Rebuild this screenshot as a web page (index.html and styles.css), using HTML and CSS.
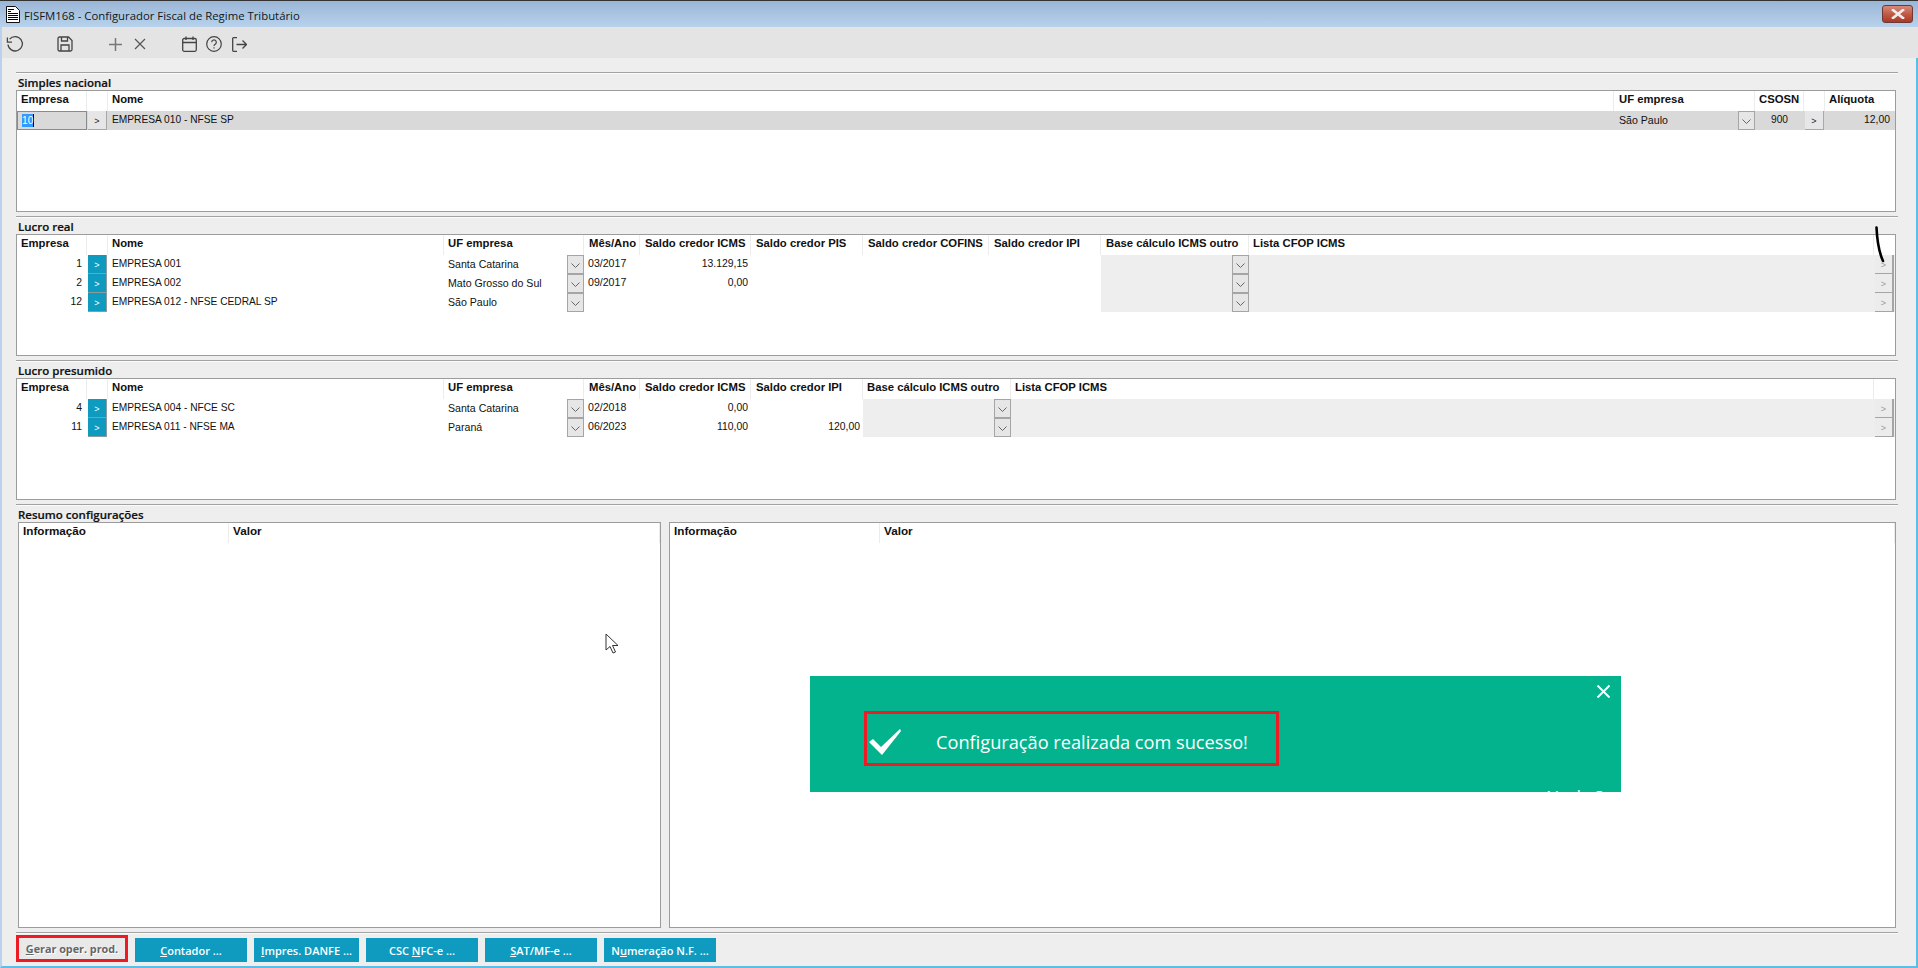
FILE: index.html
```html
<!DOCTYPE html>
<html lang="pt-BR">
<head>
<meta charset="utf-8">
<title>FISFM168 - Configurador Fiscal de Regime Tributário</title>
<link rel="stylesheet" href="styles.css">
</head>
<body>
<div class="window">
  <header class="titlebar">
    <svg class="doc-icon" width="14" height="17" viewBox="0 0 14 17"><path d="M.5.5h9l4 4v12H.5z" fill="#fff" stroke="#111"/><path d="M2 3.500h6M2 5.500h3M2 7.500h10M2 9.500h10M2 11.500h10M2 13.500h10" stroke="#000" stroke-width="1.200"/></svg>
    <span class="title-text">FISFM168 - Configurador Fiscal de Regime Tributário</span>
    <button class="win-close"><svg width="14" height="10" viewBox="0 0 14 10"><path d="M2 1l10 8M12 1L2 9" stroke="#eee" stroke-width="2.600" stroke-linecap="square"/></svg></button>
  </header>
  <nav class="toolbar">
    <svg class="tool t-undo" width="18" height="18" viewBox="0 0 18 18" fill="none" stroke="#444" stroke-width="1.3"><path d="M3.600 4.200A7.200 7.200 0 1 1 2 9.500"/><path d="M1.400 2.600v4.600h4.600"/></svg>
    <svg class="tool t-save" width="16" height="16" viewBox="0 0 16 16" fill="none" stroke="#444" stroke-width="1.3"><path d="M1 2.500A1.500 1.500 0 0 1 2.500 1h9L15 4.500v9a1.500 1.500 0 0 1-1.500 1.500h-11A1.500 1.500 0 0 1 1 13.500z"/><path d="M4.500 1v4h6V1M4 15V9h8v6"/></svg>
    <svg class="tool t-plus" width="13" height="13" viewBox="0 0 13 13" fill="none" stroke="#777" stroke-width="1.500"><path d="M6.500 0v13M0 6.500h13"/></svg>
    <svg class="tool t-x" width="12" height="12" viewBox="0 0 12 12" fill="none" stroke="#555" stroke-width="1.200"><path d="M1 1l10 10M11 1L1 11"/></svg>
    <svg class="tool t-cal" width="15" height="16" viewBox="0 0 15 16" fill="none" stroke="#444" stroke-width="1.300"><rect x=".7" y="2.500" width="13.600" height="12.800" rx="1.500"/><path d="M.7 6.500h13.600M4 .5v3.500M11 .5v3.500"/></svg>
    <svg class="tool t-help" width="16" height="16" viewBox="0 0 16 16" fill="none" stroke="#444" stroke-width="1.200"><circle cx="8" cy="8" r="7.300"/><path d="M5.700 6.200a2.300 2.300 0 1 1 3.500 2c-.8.500-1.200.9-1.200 1.800"/><path d="M8 11.300v1.200"/></svg>
    <svg class="tool t-exit" width="15" height="15" viewBox="0 0 15 15" fill="none" stroke="#444" stroke-width="1.300"><path d="M5 .7H1.500a.8.800 0 0 0-.8.800v12a.8.800 0 0 0 .8.800H5"/><path d="M4.500 7.500h10M10.500 3.500l4 4-4 4"/></svg>
  </nav>

  <main class="content">
    <section class="group">
      <h2 class="group-label">Simples nacional</h2>
      <div class="box">
        <div class="grid cols-simples head">
          <div class="th">Empresa</div><div class="th"></div><div class="th">Nome</div><div class="th span2 inset">UF empresa</div><div class="th">CSOSN</div><div class="th"></div><div class="th last">Alíquota</div>
        </div>
        <div class="grid cols-simples row current">
          <div class="td input"><span class="sel">10</span></div>
          <div class="td"><button class="go plain">&gt;</button></div>
          <div class="td">EMPRESA 010 - NFSE SP</div>
          <div class="td uf inset">São Paulo</div>
          <div class="td"><button class="combo"><svg class="chev" width="9" height="5" viewBox="0 0 9 5"><path d="M.5.500l4 4 4-4" fill="none" stroke="#666"/></svg></button></div>
          <div class="td center">900</div>
          <div class="td"><button class="go plain">&gt;</button></div>
          <div class="td num wide">12,00</div>
        </div>
      </div>
    </section>

    <section class="group">
      <h2 class="group-label">Lucro real</h2>
      <div class="box">
        <div class="grid cols-real head">
          <div class="th">Empresa</div><div class="th"></div><div class="th">Nome</div><div class="th span2">UF empresa</div><div class="th inset">Mês/Ano</div><div class="th inset">Saldo credor ICMS</div><div class="th inset">Saldo credor PIS</div><div class="th inset">Saldo credor COFINS</div><div class="th inset">Saldo credor IPI</div><div class="th span2 inset">Base cálculo ICMS outro</div><div class="th">Lista CFOP ICMS</div><div class="th last"></div>
        </div>
        <div class="grid cols-real row">
          <div class="td num wide">1</div><div class="td"><button class="go">&gt;</button></div><div class="td">EMPRESA 001</div><div class="td uf">Santa Catarina</div>
          <div class="td"><button class="combo"><svg class="chev" width="9" height="5" viewBox="0 0 9 5"><path d="M.5.500l4 4 4-4" fill="none" stroke="#666"/></svg></button></div>
          <div class="td date">03/2017</div><div class="td num">13.129,15</div><div class="td"></div><div class="td"></div><div class="td"></div><div class="td off"></div>
          <div class="td off"><button class="combo"><svg class="chev" width="9" height="5" viewBox="0 0 9 5"><path d="M.5.500l4 4 4-4" fill="none" stroke="#666"/></svg></button></div>
          <div class="td off"></div><div class="td off"><button class="go dim">&gt;</button></div>
        </div>
        <div class="grid cols-real row">
          <div class="td num wide">2</div><div class="td"><button class="go">&gt;</button></div><div class="td">EMPRESA 002</div><div class="td uf">Mato Grosso do Sul</div>
          <div class="td"><button class="combo"><svg class="chev" width="9" height="5" viewBox="0 0 9 5"><path d="M.5.500l4 4 4-4" fill="none" stroke="#666"/></svg></button></div>
          <div class="td date">09/2017</div><div class="td num">0,00</div><div class="td"></div><div class="td"></div><div class="td"></div><div class="td off"></div>
          <div class="td off"><button class="combo"><svg class="chev" width="9" height="5" viewBox="0 0 9 5"><path d="M.5.500l4 4 4-4" fill="none" stroke="#666"/></svg></button></div>
          <div class="td off"></div><div class="td off"><button class="go dim">&gt;</button></div>
        </div>
        <div class="grid cols-real row">
          <div class="td num wide">12</div><div class="td"><button class="go">&gt;</button></div><div class="td">EMPRESA 012 - NFSE CEDRAL SP</div><div class="td uf">São Paulo</div>
          <div class="td"><button class="combo"><svg class="chev" width="9" height="5" viewBox="0 0 9 5"><path d="M.5.500l4 4 4-4" fill="none" stroke="#666"/></svg></button></div>
          <div class="td"></div><div class="td"></div><div class="td"></div><div class="td"></div><div class="td"></div><div class="td off"></div>
          <div class="td off"><button class="combo"><svg class="chev" width="9" height="5" viewBox="0 0 9 5"><path d="M.5.500l4 4 4-4" fill="none" stroke="#666"/></svg></button></div>
          <div class="td off"></div><div class="td off"><button class="go dim">&gt;</button></div>
        </div>
      </div>
    </section>

    <section class="group">
      <h2 class="group-label">Lucro presumido</h2>
      <div class="box">
        <div class="grid cols-pres head">
          <div class="th">Empresa</div><div class="th"></div><div class="th">Nome</div><div class="th span2">UF empresa</div><div class="th inset">Mês/Ano</div><div class="th inset">Saldo credor ICMS</div><div class="th inset">Saldo credor IPI</div><div class="th span2">Base cálculo ICMS outro</div><div class="th">Lista CFOP ICMS</div><div class="th last"></div>
        </div>
        <div class="grid cols-pres row">
          <div class="td num wide">4</div><div class="td"><button class="go">&gt;</button></div><div class="td">EMPRESA 004 - NFCE SC</div><div class="td uf">Santa Catarina</div>
          <div class="td"><button class="combo"><svg class="chev" width="9" height="5" viewBox="0 0 9 5"><path d="M.5.500l4 4 4-4" fill="none" stroke="#666"/></svg></button></div>
          <div class="td date">02/2018</div><div class="td num">0,00</div><div class="td"></div><div class="td off"></div>
          <div class="td off"><button class="combo"><svg class="chev" width="9" height="5" viewBox="0 0 9 5"><path d="M.5.500l4 4 4-4" fill="none" stroke="#666"/></svg></button></div>
          <div class="td off"></div><div class="td off"><button class="go dim">&gt;</button></div>
        </div>
        <div class="grid cols-pres row">
          <div class="td num wide">11</div><div class="td"><button class="go">&gt;</button></div><div class="td">EMPRESA 011 - NFSE MA</div><div class="td uf">Paraná</div>
          <div class="td"><button class="combo"><svg class="chev" width="9" height="5" viewBox="0 0 9 5"><path d="M.5.500l4 4 4-4" fill="none" stroke="#666"/></svg></button></div>
          <div class="td date">06/2023</div><div class="td num">110,00</div><div class="td num">120,00</div><div class="td off"></div>
          <div class="td off"><button class="combo"><svg class="chev" width="9" height="5" viewBox="0 0 9 5"><path d="M.5.500l4 4 4-4" fill="none" stroke="#666"/></svg></button></div>
          <div class="td off"></div><div class="td off"><button class="go dim">&gt;</button></div>
        </div>
      </div>
    </section>

    <section class="group last-group">
      <h2 class="group-label">Resumo configurações</h2>
      <div class="summary">
        <div class="box sum-left">
          <div class="grid cols-sum-l head"><div class="th info">Informação</div><div class="th info">Valor</div></div>
        </div>
        <div class="box sum-right">
          <div class="grid cols-sum-r head"><div class="th info">Informação</div><div class="th info">Valor</div></div>
        </div>
      </div>
    </section>
  </main>

  <footer class="footer">
    <button class="action disabled"><u>G</u>erar oper. prod.</button>
    <button class="action"><u>C</u>ontador ...</button>
    <button class="action narrow"><u>I</u>mpres. DANFE ...</button>
    <button class="action">CSC <u>N</u>FC-e ...</button>
    <button class="action"><u>S</u>AT/MF-e ...</button>
    <button class="action">N<u>u</u>meração N.F. ...</button>
  </footer>

  <div class="toast">
    <button class="toast-close"><svg width="15" height="13" viewBox="0 0 15 13"><path d="M1.500.500l12 12M13.500.500l-12 12" stroke="#fff" stroke-width="2" fill="none"/></svg></button>
    <div class="toast-msg">
      <svg class="check" width="34" height="26" viewBox="0 0 34 26"><path d="M1 13l4-3 8 8L32 0l1 2-19 24z" fill="#fff"/></svg>
      <span class="toast-text">Configuração realizada com sucesso!</span>
    </div>
    <span class="toast-help">Ajuda ?</span>
  </div>

  <svg class="mark" width="10" height="38" viewBox="0 0 10 38"><path d="M1.500 1.500C2 12 3 24 8 35" fill="none" stroke="#000" stroke-width="2.600" stroke-linecap="round"/></svg>
  <svg class="pointer" width="14" height="21" viewBox="0 0 14 21"><path d="M1 1v16l4-3.500 3 6.500 2.500-1-3-6.500h5.500z" fill="#fff" stroke="#333"/></svg>
</div>
</body>
</html>
```

FILE: styles.css
```css
* { box-sizing: border-box; }
html, body { margin: 0; padding: 0; }
body { width: 1918px; height: 968px; overflow: hidden; background: #eeeeee; }
button { font: inherit; margin: 0; padding: 0; border: 0; background: none; }

.window {
  position: relative;
  width: 1918px;
  height: 968px;
  display: flex;
  flex-direction: column;
  background: #eeeeee;
  font-family: "Liberation Sans", Arial, sans-serif;
  font-size: 10.2px;
  color: #111;
  border-left: 2px solid #b9d3ec;
  border-right: 2px solid #5cbde6;
  border-bottom: 2px solid #5cbde6;
}

.titlebar {
  height: 27px;
  flex: none;
  margin: 0 -2px 0 -2px;
  padding: 1px 5px 0 6px;
  display: flex;
  align-items: center;
  border-top: 1px solid #333;
  background: linear-gradient(#9ab6d6, #b8d2ec);
}
.doc-icon { flex: none; }
.title-text {
  margin: 2px 0 0 4px;
  font-family: "Open Sans", sans-serif;
  font-size: 11.35px;
  color: #101820;
}
.win-close {
  margin-left: auto;
  margin-top: -2px;
  width: 31px;
  height: 18px;
  display: flex;
  align-items: center;
  justify-content: center;
  border: 1px solid #6b3a38;
  border-radius: 3px;
  background: linear-gradient(#d88a7c, #c25a45 50%, #a93a25);
}

.toolbar {
  height: 31px;
  flex: none;
  margin-right: -2px;
  padding-top: 3px;
  display: flex;
  align-items: center;
  background: #e4e4e4;
}
.tool { flex: none; }
.t-undo { margin-left: 4px; }
.t-save { margin-left: 33px; }
.t-plus { margin-left: 36px; }
.t-x { margin-left: 12px; }
.t-cal { margin-left: 36px; }
.t-help { margin-left: 9px; }
.t-exit { margin-left: 10px; }

.content {
  padding: 14px 0 0 14px;
  flex: none;
}
.group {
  width: 1882px;
  height: 144px;
  border-top: 1px solid #a2a2a2;
  box-shadow: inset 0 1px 0 #fbfbfb;
}
.last-group { height: 428px; }
.group-label {
  margin: 0;
  height: 17px;
  padding-left: 2px;
  font-family: "Open Sans", sans-serif;
  font-size: 11.5px;
  font-weight: 600;
  line-height: 20px;
  color: #111;
  -webkit-text-stroke: 0.2px #111;
}
.box {
  width: 1880px;
  height: 122px;
  border: 1px solid #9c9c9c;
  background: #fff;
}
.summary {
  display: flex;
  gap: 8px;
  padding-left: 2px;
}
.sum-left { width: 643px; height: 406px; }
.sum-right { width: 1227px; height: 406px; }

.grid { display: grid; }
.cols-simples { grid-template-columns: 70px 21px 1506px 124px 17px 49px 21px 70px; }
.cols-real { grid-template-columns: 70px 21px 336px 123px 17px 56px 111px 112px 126px 112px 131px 17px 625px 21px; }
.cols-pres { grid-template-columns: 70px 21px 336px 123px 17px 56px 111px 112px 131px 17px 863px 21px; }
.cols-sum-l { grid-template-columns: 210px 1fr; }
.cols-sum-r { grid-template-columns: 210px 1fr; }

.head { height: 20px; }
.th {
  min-width: 0;
  padding: 0 0 0 4px;
  font-size: 11.3px;
  font-weight: 700;
  line-height: 16px;
  white-space: nowrap;
  overflow: hidden;
  border-right: 1px solid #ececec;
}
.th.last { border-right: 0; }
.th.inset, .td.inset { padding-left: 5px; }
.th.info { padding-left: 4px; border-right: 1px solid #ececec; font-size: 11.7px; }
.span2 { grid-column: span 2; }

.row { height: 19px; }
.row.current { background: #d9d9d9; }
.td {
  min-width: 0;
  height: 19px;
  padding-left: 4px;
  line-height: 17px;
  white-space: nowrap;
  overflow: hidden;
}
.td:has(> button) { padding: 0; }
.td.uf { line-height: 19px; font-size: 10.6px; }
.td.date { font-size: 10.6px; }
.td.num { padding: 0 3px 0 0; text-align: right; font-size: 10.4px; }
.td.num.wide { padding-right: 5px; }
.td.center { padding: 0; text-align: center; }
.td.off { background: #eeeeee; }
.td.input {
  padding-left: 4px;
  border: 1px solid #8a8a8a;
  line-height: 17px;
}
.sel { background: #3399ff; color: #fff; padding: 1px 0; border-right: 1px solid #000; }

.go {
  display: block;
  width: 19px;
  height: 19px;
  margin-left: 1px;
  background: #0e9bbf;
  color: #fff;
  font-size: 9px;
  line-height: 20px;
  text-align: center;
  border-right: 1px solid #8a9ba2;
  border-bottom: 1px solid #8a9ba2;
}
.go.plain {
  background: #e6e6e6;
  color: #222;
  border-color: #a8a8a8;
}
.go.dim {
  background: #ececec;
  color: #999;
  border-right: 2px solid #a5a5a5;
  border-bottom: 1px solid #a5a5a5;
}
.combo {
  display: flex;
  align-items: center;
  justify-content: center;
  width: 17px;
  height: 19px;
  background: #e6e6e6;
  border: 1px solid #a5a5a5;
}
.chev { display: block; margin-top: 1px; }

.footer {
  flex: none;
  margin-left: 14px;
  width: 1882px;
  height: 34px;
  padding: 2px 0 4px;
  display: flex;
  align-items: flex-end;
  gap: 7px;
  border-top: 1px solid #a2a2a2;
  box-shadow: inset 0 1px 0 #fbfbfb;
}
.action {
  width: 112px;
  height: 24px;
  background: #0e9bbf;
  color: #fff;
  font-family: "Open Sans", sans-serif;
  font-size: 11px;
  font-weight: 600;
  text-align: center;
}
.action.narrow { width: 105px; }
.action.disabled {
  height: 27px;
  background: #e9e9e9;
  color: #666;
  border: 3px solid #ed1c24;
  font-weight: 700;
  font-size: 10.8px;
  text-shadow: 1px 1px 0 #fff;
}

.toast {
  position: absolute;
  left: 808px;
  top: 676px;
  width: 811px;
  height: 116px;
  overflow: hidden;
  background: #02b38d;
  color: #fff;
  font-family: "Open Sans", sans-serif;
}
.toast-close {
  position: absolute;
  right: 10px;
  top: 9px;
  width: 15px;
  height: 13px;
  line-height: 0;
}
.toast-msg {
  position: absolute;
  left: 54px;
  top: 35px;
  width: 415px;
  height: 55px;
  display: flex;
  align-items: center;
  padding: 6px 0 0 1px;
  border: 3px solid #ed1c24;
}
.check { flex: none; }
.toast-text {
  margin-left: 34px;
  font-size: 18.2px;
  font-weight: 400;
  white-space: nowrap;
}
.toast-help {
  position: absolute;
  left: 733px;
  top: 111px;
  font-size: 18px;
  line-height: 20px;
}

.mark { position: absolute; left: 1873px; top: 226px; }
.pointer { position: absolute; left: 603px; top: 633px; }
```
